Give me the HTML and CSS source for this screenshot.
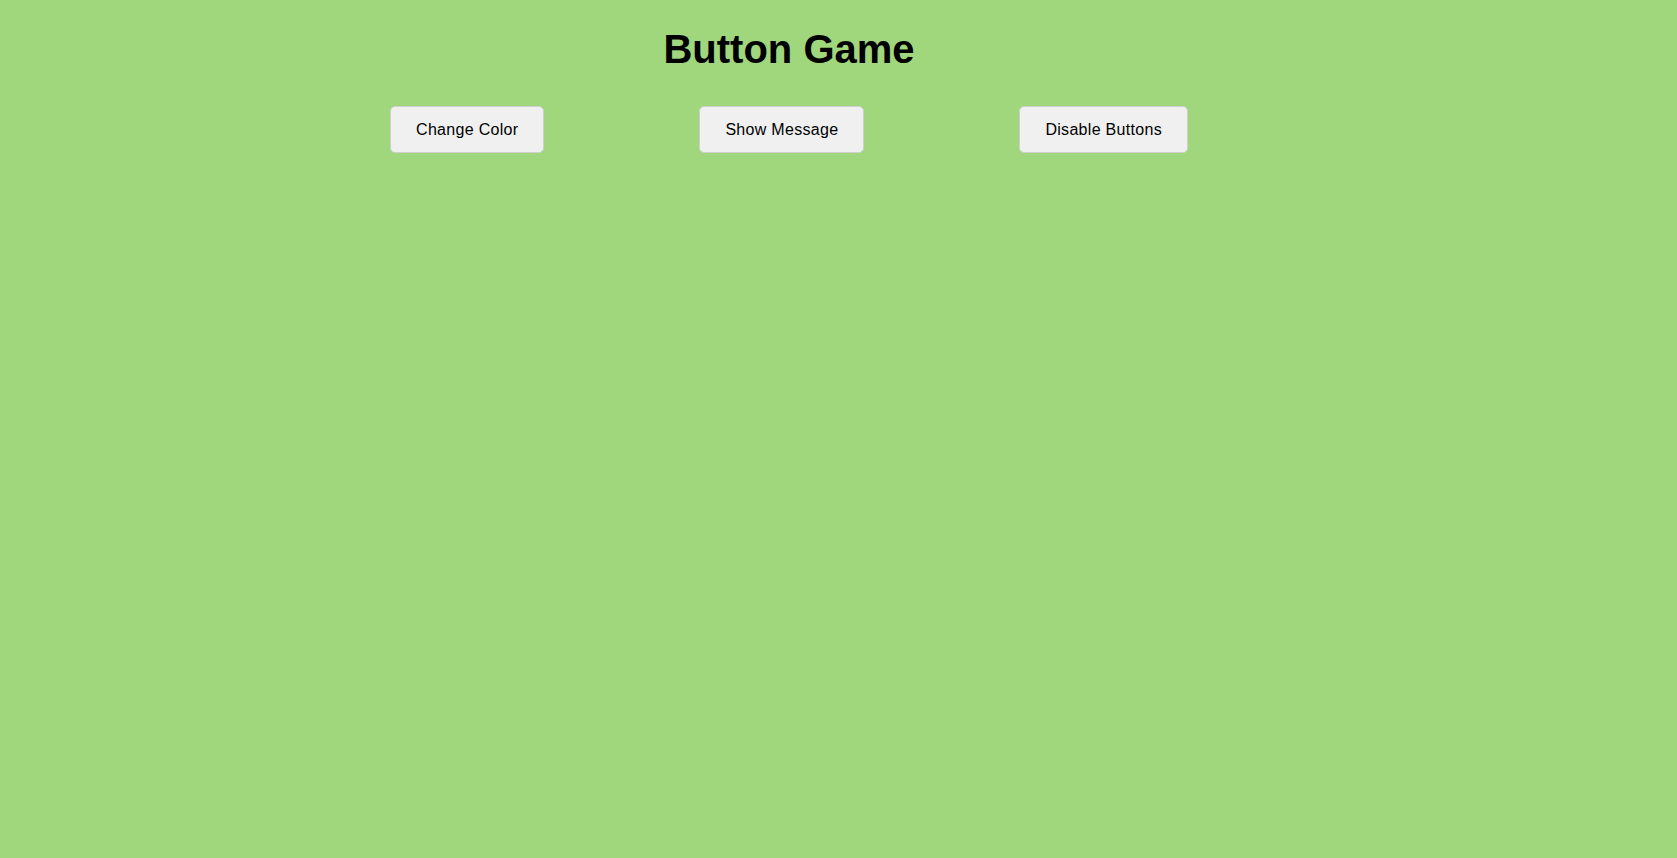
FILE: index.html
```html
<!DOCTYPE html>
<html lang="en">
<head>
<meta charset="utf-8">
<title>Button Game</title>
<link rel="stylesheet" href="styles.css">
</head>
<body>
<main class="page">
  <h1 class="title">Button Game</h1>
  <div class="buttons">
    <button class="btn">Change Color</button>
    <button class="btn">Show Message</button>
    <button class="btn">Disable Buttons</button>
  </div>
</main>
</body>
</html>
```

FILE: styles.css
```css
html, body {
  margin: 0;
  padding: 0;
  height: 100%;
}
body {
  background: #a1d77c;
  font-family: "Liberation Sans", Arial, sans-serif;
  color: #000;
}
.page {
  width: 1578px;
  display: flex;
  flex-direction: column;
  align-items: center;
  padding-top: 26px;
}
.title {
  margin: 0;
  font-size: 40px;
  font-weight: bold;
  line-height: 46px;
}
.buttons {
  display: flex;
  gap: 155px;
  margin-top: 34px;
}
.btn {
  font-family: "Liberation Sans", Arial, sans-serif;
  font-size: 16px;
  letter-spacing: 0.3px;
  line-height: 19px;
  color: #000;
  background: #f0f0f0;
  border: 1px solid #cfcfcf;
  border-radius: 5px;
  padding: 13px 25px;
  cursor: pointer;
}
```
